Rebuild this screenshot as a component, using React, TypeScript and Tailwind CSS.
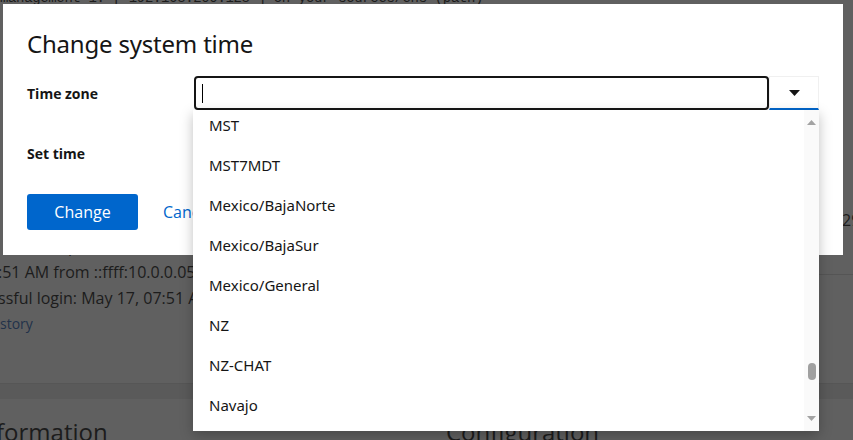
import React from 'react';

const zones = ['MST', 'MST7MDT', 'Mexico/BajaNorte', 'Mexico/BajaSur', 'Mexico/General', 'NZ', 'NZ-CHAT', 'Navajo'];

function Backdrop() {
  // dimmed page behind the modal
  return (
    <div className="flex flex-col w-full h-full text-[#1c1c1c]">
      <div className="h-[6px] overflow-hidden relative">
        <div className="absolute -top-[12px] left-0 whitespace-nowrap font-['Liberation_Mono',monospace] text-[14px] tracking-tight">
          management 1: [ 192.168.200.128 ] on your sources/ens (path)
        </div>
      </div>
      <div className="flex">
        <div className="flex-1 flex flex-col pt-[241px] -ml-[2px] text-[16px] leading-[26px]">
          <div className="-mt-[14px] pl-[8px]">in attempt</div>
          <div>:51 AM from ::ffff:10.0.0.05</div>
          <div>ssful login: May 17, 07:51 AM</div>
          <div className="text-[14px] text-[#22324a] pl-[2px]">story</div>
        </div>
        <div className="w-[34px] flex flex-col pt-[202px]">
          <div className="text-[16px] pl-[23px] h-[66px] whitespace-nowrap">29</div>
          <div className="border-t border-[#555]" />
        </div>
      </div>
      <div className="mt-auto">
        <div className="h-[16px] bg-[#5a5a5a] border-t border-[#565656]" />
        <div className="flex h-[41px] overflow-hidden">
          <div className="w-[422px] pt-[18px] -ml-[4px] text-[24px] font-['Open_Sans',sans-serif] leading-[30px]">formation</div>
          <div className="flex-1 pt-[18px] pl-[28px] text-[24px] font-['Open_Sans',sans-serif] leading-[30px]">Configuration</div>
        </div>
      </div>
    </div>
  );
}

export default function App() {
  return (
    <div className="relative w-[853px] h-[440px] overflow-hidden bg-[#606060] font-['Open_Sans',sans-serif]">
      <Backdrop />

      <div className="absolute left-[3px] top-[4px] w-[840px] h-[251px] bg-white px-[24px] pt-[24px]">
        <h1 className="text-[24px] leading-[32px] text-[#151515] font-['Noto_Sans',sans-serif] tracking-[-0.2px]">Change system time</h1>

        <div className="flex items-center mt-[16px] h-[34px]">
          <div className="w-[167px] text-[14px] font-bold text-[#151515]">Time zone</div>
          <div className="relative flex-1 flex h-[34px]">
            <div className="flex-1 border-2 border-[#151515] rounded-[4px] flex items-center pl-[6px]">
              <div className="w-px h-[19px] bg-black" />
            </div>
            <div className="w-[50px] border border-[#f0f0f0] border-b-2 border-b-[#0066cc] flex items-center justify-center">
              <svg width="11" height="6" viewBox="0 0 11 6"><path d="M0 0h11L5.5 6z" fill="#151515" /></svg>
            </div>

            <div className="absolute left-[-1px] right-0 top-[34px] h-[321px] bg-white shadow-[0_4px_12px_rgba(0,0,0,0.25)] flex z-10">
              <div className="flex-1 flex flex-col">
                {zones.map((z) => (
                  <div key={z} className="h-[40px] flex items-center pl-[16px] text-[15px] text-[#151515] font-['Noto_Sans',sans-serif] first:-mt-[5px]">
                    {z}
                  </div>
                ))}
              </div>
              <div className="w-[15px] bg-[#fafafa] flex flex-col items-center justify-between py-[10px]">
                <svg width="9" height="5" viewBox="0 0 9 5"><path d="M0 5h9L4.5 0z" fill="#a3a3a3" /></svg>
                <div className="flex-1 w-full flex flex-col items-center justify-end pb-[36px]">
                  <div className="w-[8px] h-[17px] rounded-full bg-[#a0a0a0]" />
                </div>
                <svg width="9" height="5" viewBox="0 0 9 5"><path d="M0 0h9L4.5 5z" fill="#a3a3a3" /></svg>
              </div>
            </div>
          </div>
        </div>

        <div className="flex items-center mt-[26px] h-[34px]">
          <div className="w-[167px] text-[14px] font-bold text-[#151515]">Set time</div>
        </div>

        <div className="flex items-center gap-[25px] mt-[24px]">
          <button className="w-[111px] h-[36px] rounded-[3px] bg-[#0066cc] text-white text-[16px]">Change</button>
          <span className="text-[16px] text-[#0066cc]">Cancel</span>
        </div>
      </div>
    </div>
  );
}
